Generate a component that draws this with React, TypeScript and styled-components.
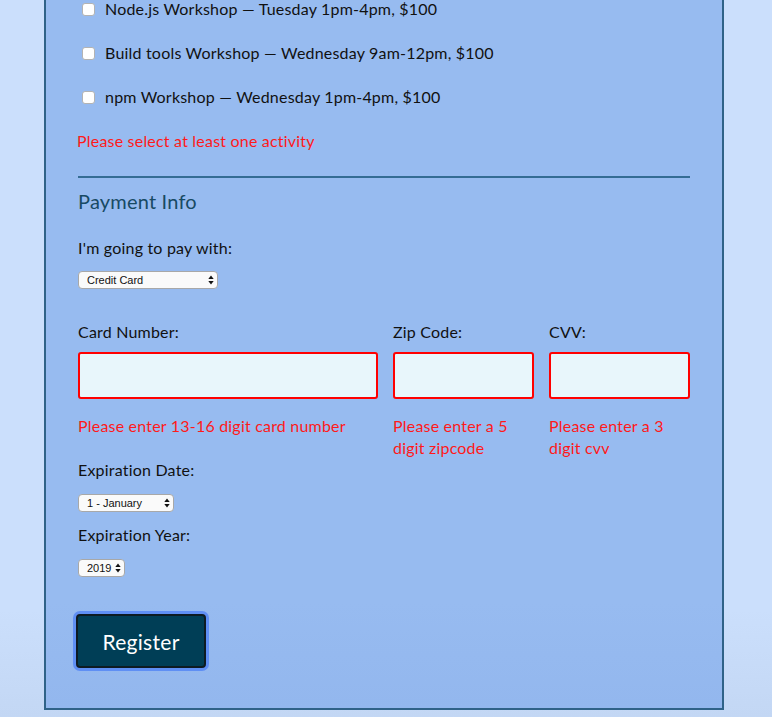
import React from "react";
import styled, { createGlobalStyle } from "styled-components";

const Global = createGlobalStyle`
  html, body { margin: 0; padding: 0; }
  body {
    background: linear-gradient(#cbdffc 0%, #cbdffc 85%, #c3d7f4 100%);
    min-height: 717px;
    font-family: Lato, "Noto Sans", sans-serif;
    letter-spacing: 0.2px;
    color: #111;
    overflow: hidden;
  }
`;

const Panel = styled.form`
  box-sizing: border-box;
  width: 680px;
  margin-left: 44px;
  background: linear-gradient(#97bbf0 0%, #97bbf0 85%, #93b7ee 100%);
  border: 2px solid #2f6288;
  border-top: none;
  padding: 0 32px 40px 32px;
`;

const ActivityRow = styled.label`
  display: flex;
  align-items: center;
  height: 18px;
  line-height: 18px;
  font-size: 16px;
  margin-bottom: 26px;
`;

const Check = styled.input`
  appearance: none;
  width: 13px;
  height: 13px;
  margin: 0 10px 0 4px;
  background: #fff;
  border: 1px solid #b3b3b3;
  border-radius: 3px;
  box-sizing: border-box;
`;

const ErrorText = styled.p<{ $mt?: number }>`
  margin: ${(p) => p.$mt ?? 0}px 0 0 0;
  color: #ff1a1a;
  font-size: 16px;
  line-height: 22px;
`;

const ActivityError = styled(ErrorText)`
  margin: -1px 0 0 -1px;
  line-height: 20px;
`;

const Rule = styled.hr`
  border: none;
  height: 2px;
  background: #346c94;
  margin: 25px 0 11px 0;
`;

const Legend = styled.h2`
  margin: 0;
  font-size: 20px;
  line-height: 24px;
  font-weight: 400;
  color: #174a64;
`;

const FieldLabel = styled.label<{ $mt: number }>`
  display: block;
  margin-top: ${(p) => p.$mt}px;
  font-size: 16px;
  line-height: 20px;
`;

const SelectWrap = styled.div<{ $mt: number }>`
  position: relative;
  display: inline-block;
  margin-top: ${(p) => p.$mt}px;
  vertical-align: top;
`;

const Select = styled.select<{ $w: number }>`
  appearance: none;
  display: block;
  box-sizing: border-box;
  width: ${(p) => p.$w}px;
  height: 18px;
  padding: 0 0 0 8px;
  border: 1px solid #a8a8a8;
  border-radius: 4px;
  background: #fafafa;
  color: #111;
  font-family: "Liberation Sans", Arial, sans-serif;
  letter-spacing: 0;
  font-size: 11px;
  line-height: 16px;
`;

const Arrows = styled.svg`
  position: absolute;
  right: 4px;
  top: 4px;
  pointer-events: none;
`;

const CardGrid = styled.div`
  display: grid;
  grid-template-columns: 300px 141px 141px;
  column-gap: 15px;
  margin-top: 33px;
`;

const Field = styled.div`
  display: flex;
  flex-direction: column;
`;

const CardLabel = styled.label`
  font-size: 16px;
  line-height: 20px;
`;

const TextInput = styled.input`
  box-sizing: border-box;
  height: 47px;
  margin-top: 10px;
  width: 100%;
  border: 2px solid #ff0000;
  border-radius: 3px;
  background: #e8f6fb;
  outline: none;
`;

const Block = styled.div``;

const Register = styled.button`
  display: block;
  box-sizing: border-box;
  width: 130px;
  height: 54px;
  margin: 37px 0 0 -2px;
  background: #003e56;
  color: #fff;
  border: 2px solid #0d1b22;
  border-radius: 4px;
  box-shadow: 0 0 0 3px #5f8ff4;
  font-family: Lato, "Noto Sans", sans-serif;
  letter-spacing: 0.3px;
  font-size: 21px;
  cursor: pointer;
`;

function UpDown() {
  return (
    <Arrows width="6" height="10" viewBox="0 0 6 10">
      <path d="M3 0.5 L5.7 4 L0.3 4 Z" fill="#111" />
      <path d="M3 9.5 L5.7 6 L0.3 6 Z" fill="#111" />
    </Arrows>
  );
}

function NativeSelect({ w, mt, options }: { w: number; mt: number; options: string[] }) {
  return (
    <SelectWrap $mt={mt}>
      <Select $w={w}>
        {options.map((o) => (
          <option key={o}>{o}</option>
        ))}
      </Select>
      <UpDown />
    </SelectWrap>
  );
}

const activities = [
  "Node.js Workshop — Tuesday 1pm-4pm, $100",
  "Build tools Workshop — Wednesday 9am-12pm, $100",
  "npm Workshop — Wednesday 1pm-4pm, $100",
];

export default function App() {
  return (
    <>
      <Global />
      <Panel onSubmit={(e) => e.preventDefault()}>
        {activities.map((a) => (
          <ActivityRow key={a}>
            <Check type="checkbox" />
            {a}
          </ActivityRow>
        ))}
        <ActivityError>Please select at least one activity</ActivityError>
        <Rule />
        <Legend>Payment Info</Legend>
        <FieldLabel $mt={25}>I'm going to pay with:</FieldLabel>
        <Block>
          <NativeSelect w={140} mt={13} options={["Credit Card", "PayPal", "Bitcoin"]} />
        </Block>
        <CardGrid>
          <Field>
            <CardLabel>Card Number:</CardLabel>
            <TextInput type="text" />
            <ErrorText $mt={16}>Please enter 13-16 digit card number</ErrorText>
          </Field>
          <Field>
            <CardLabel>Zip Code:</CardLabel>
            <TextInput type="text" />
            <ErrorText $mt={16}>Please enter a 5 digit zipcode</ErrorText>
          </Field>
          <Field>
            <CardLabel>CVV:</CardLabel>
            <TextInput type="text" />
            <ErrorText $mt={16}>Please enter a 3 digit cvv</ErrorText>
          </Field>
        </CardGrid>
        <FieldLabel $mt={1}>Expiration Date:</FieldLabel>
        <Block>
          <NativeSelect w={96} mt={14} options={["1 - January"]} />
        </Block>
        <FieldLabel $mt={13}>Expiration Year:</FieldLabel>
        <Block>
          <NativeSelect w={47} mt={14} options={["2019"]} />
        </Block>
        <Register type="submit">Register</Register>
      </Panel>
    </>
  );
}
